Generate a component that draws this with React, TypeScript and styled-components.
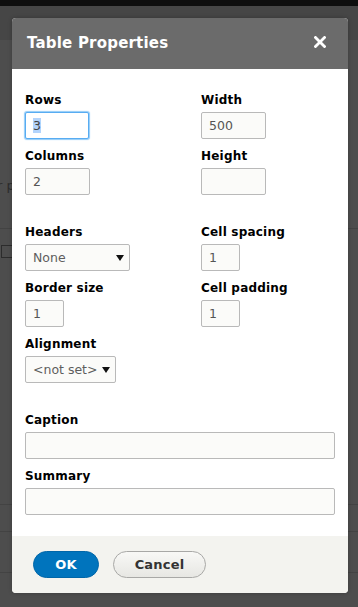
import React, { useEffect, useRef } from 'react';
import styled, { createGlobalStyle, css } from 'styled-components';

const Global = createGlobalStyle`
  html, body { margin: 0; padding: 0; background: #4d4d4d; }
  * { box-sizing: border-box; }
  ::selection { background: #b3d4fc; color: #444; }
`;

const Screen = styled.div`
  position: relative;
  width: 358px;
  height: 607px;
  overflow: hidden;
  background: #4d4d4d;
  font-family: "DejaVu Sans", "Noto Sans", sans-serif;
`;

const TopStrip = styled.div`
  height: 6px;
  background: #0e0e0e;
`;

const Toolbar = styled.div`
  height: 34px;
  background: #464646;
`;

const PageRow = styled.div<{ $h: number; $line?: boolean }>`
  height: ${(p) => p.$h}px;
  border-bottom: ${(p) => (p.$line ? '1px solid #434343' : 'none')};
  display: flex;
  align-items: ${(p) => (p.$line ? 'flex-end' : 'flex-start')};
`;

const PageText = styled.span`
  font: 13px/16px "DejaVu Sans", sans-serif;
  color: #2c2c2c;
  margin: 0 0 34px -3px;
  white-space: nowrap;
`;

const PageBox = styled.span`
  width: 12px;
  height: 13px;
  border: 1px solid #2c2c2c;
  margin: 16px 0 0 1px;
`;

const Dialog = styled.div`
  position: absolute;
  left: 12px;
  top: 18px;
  width: 336px;
  border-radius: 4px;
  overflow: hidden;
  background: #fff;
  box-shadow: 0 0 4px rgba(0, 0, 0, 0.25);
`;

const Header = styled.div`
  height: 51px;
  background: #6b6b6b;
  display: flex;
  align-items: center;
  justify-content: space-between;
  padding: 0 22px 0 15px;
`;

const Title = styled.h2`
  margin: 0;
  color: #fff;
  font: bold 15px/15px "DejaVu Sans", sans-serif;
  letter-spacing: 0.2px;
`;

const CloseButton = styled.button`
  border: 0;
  padding: 0;
  margin: 0 0 3px 0;
  background: transparent;
  width: 12px;
  height: 12px;
  display: flex;
  cursor: pointer;
`;

const Body = styled.div`
  padding: 23px 13px 21px 13px;
  display: flex;
  flex-direction: column;
`;

const Section = styled.div<{ $gap?: number }>`
  display: grid;
  grid-template-columns: 176px 1fr;
  row-gap: 9px;
  margin-top: ${(p) => p.$gap ?? 0}px;
`;

const Stack = styled.div<{ $gap?: number }>`
  display: flex;
  flex-direction: column;
  gap: 9px;
  margin-top: ${(p) => p.$gap ?? 0}px;
`;

const Field = styled.div<{ $col?: number }>`
  display: flex;
  flex-direction: column;
  align-items: flex-start;
  gap: 4px;
  grid-column: ${(p) => p.$col ?? 'auto'};
`;

const Label = styled.label`
  font: bold 12px/15px "DejaVu Sans", sans-serif;
  letter-spacing: 0.2px;
  color: #000;
  padding-top: 1px;
`;

const fieldBase = css`
  height: 27px;
  border: 1px solid #b9b9b9;
  border-radius: 2px;
  background: #fbfbf9;
  padding: 0 7px;
  font: 12.5px "DejaVu Sans", sans-serif;
  color: #555;
  outline: none;
  margin: 0;
`;

const TextInput = styled.input<{ $w: number; $focused?: boolean }>`
  ${fieldBase};
  width: ${(p) => p.$w}px;
  ${(p) =>
    p.$focused &&
    css`
      background: #fff;
      border-color: #58acf2;
      box-shadow: 0 0 1px 1px #92cbf8;
    `}
`;

const SelectWrap = styled.div<{ $w: number }>`
  position: relative;
  width: ${(p) => p.$w}px;
  height: 27px;
`;

const Select = styled.select<{ $arrowSpace: number }>`
  ${fieldBase};
  width: 100%;
  appearance: none;
  -webkit-appearance: none;
  padding-right: ${(p) => p.$arrowSpace}px;
  color: #5e5e5e;
`;

const Arrow = styled.svg<{ $right: number }>`
  position: absolute;
  top: 11px;
  right: ${(p) => p.$right}px;
  pointer-events: none;
`;

const Footer = styled.div`
  background: #f3f3ef;
  padding: 15px 21px;
  display: flex;
  gap: 14px;
`;

const Button = styled.button<{ $primary?: boolean; $w: number }>`
  width: ${(p) => p.$w}px;
  height: 27px;
  border-radius: 14px;
  font: bold 13px/1 "DejaVu Sans", sans-serif;
  letter-spacing: 0.2px;
  padding: 0;
  cursor: pointer;
  ${(p) =>
    p.$primary
      ? css`
          background: #0074bd;
          border: 1px solid #0066a8;
          color: #fff;
        `
      : css`
          background: linear-gradient(#f8f8f6, #e7e7e3);
          border: 1px solid #a8a8a6;
          color: #333;
        `}
`;

function SelectBox({ w, value, right }: { w: number; value: string; right: number }) {
  return (
    <SelectWrap $w={w}>
      <Select $arrowSpace={right + 10} defaultValue={value}>
        <option value={value}>{value}</option>
      </Select>
      <Arrow $right={right} width="8" height="6" viewBox="0 0 8 6">
        <path d="M0 0 H8 L4 6 Z" fill="#111" />
      </Arrow>
    </SelectWrap>
  );
}

export default function App() {
  const rowsRef = useRef<HTMLInputElement>(null);
  useEffect(() => {
    const el = rowsRef.current;
    if (el) {
      el.focus();
      el.setSelectionRange(0, 1);
    }
  }, []);

  return (
    <Screen>
      <Global />
      <TopStrip />
      <Toolbar />
      <PageRow $h={189} $line>
        <PageText>r p</PageText>
      </PageRow>
      <PageRow $h={75}>
        <PageBox />
      </PageRow>
      <PageRow $h={201} $line />
      <PageRow $h={27} $line />
      <PageRow $h={41} $line />

      <Dialog role="dialog" aria-label="Table Properties">
        <Header>
          <Title>Table Properties</Title>
          <CloseButton aria-label="Close">
            <svg width="12" height="12" viewBox="0 0 12 12">
              <path d="M1.5 1.5 L10.5 10.5 M10.5 1.5 L1.5 10.5" stroke="#fff" strokeWidth="2.8" strokeLinecap="square" />
            </svg>
          </CloseButton>
        </Header>
        <Body>
          <Section>
            <Field>
              <Label>Rows</Label>
              <TextInput ref={rowsRef} $w={64} $focused defaultValue="3" />
            </Field>
            <Field>
              <Label>Width</Label>
              <TextInput $w={65} defaultValue="500" />
            </Field>
            <Field>
              <Label>Columns</Label>
              <TextInput $w={65} defaultValue="2" />
            </Field>
            <Field>
              <Label>Height</Label>
              <TextInput $w={65} defaultValue="" />
            </Field>
          </Section>

          <Section $gap={29}>
            <Field>
              <Label>Headers</Label>
              <SelectBox w={105} value="None" right={6} />
            </Field>
            <Field>
              <Label>Cell spacing</Label>
              <TextInput $w={39} defaultValue="1" />
            </Field>
            <Field>
              <Label>Border size</Label>
              <TextInput $w={39} defaultValue="1" />
            </Field>
            <Field>
              <Label>Cell padding</Label>
              <TextInput $w={39} defaultValue="1" />
            </Field>
            <Field $col={1}>
              <Label>Alignment</Label>
              <SelectBox w={91} value="<not set>" right={6} />
            </Field>
          </Section>

          <Stack $gap={29}>
            <Field>
              <Label>Caption</Label>
              <TextInput $w={310} defaultValue="" />
            </Field>
            <Field>
              <Label>Summary</Label>
              <TextInput $w={310} defaultValue="" />
            </Field>
          </Stack>
        </Body>
        <Footer>
          <Button $primary $w={66}>OK</Button>
          <Button $w={93}>Cancel</Button>
        </Footer>
      </Dialog>
    </Screen>
  );
}
